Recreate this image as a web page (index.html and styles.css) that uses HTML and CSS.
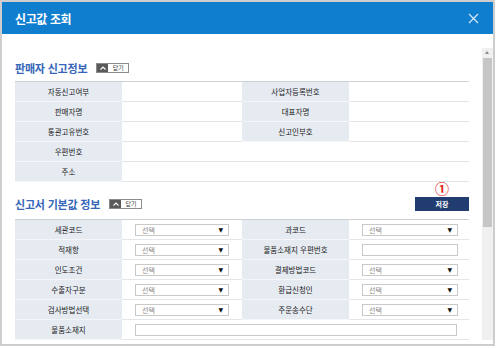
FILE: index.html
```html
<!DOCTYPE html>
<html lang="ko">
<head>
  <meta charset="UTF-8" />
  <title>신고값 조회</title>
  <link rel="stylesheet" href="styles.css">
</head>
<body>
  <div class="modal">
    <div class="modal-head">
      <h1>신고값 조회</h1>
      <svg class="close" width="11" height="11" viewBox="0 0 11 11"><path d="M1 1L10 10M10 1L1 10" stroke="#d2e6f7" stroke-width="1.3" fill="none"/></svg>
    </div>

    <div class="modal-body">
      <div class="content">
        <!-- 판매자 신고정보 -->
        <div class="sec-head first">
          <div class="sec-title">
            <h2>판매자 신고정보</h2>
            <span class="toggle">
              <span class="toggle-ico"><svg width="6" height="4" viewBox="0 0 6 4"><path d="M0.5 3.5L3 1L5.5 3.5" stroke="#fff" stroke-width="1.2" fill="none"/></svg></span>
              <span class="toggle-txt">닫기</span>
            </span>
          </div>
        </div>
        <div class="grid">
          <div class="lbl">자동신고여부</div><div class="val"></div>
          <div class="lbl">사업자등록번호</div><div class="val"></div>
          <div class="lbl">판매자명</div><div class="val"></div>
          <div class="lbl">대표자명</div><div class="val"></div>
          <div class="lbl">통관고유번호</div><div class="val"></div>
          <div class="lbl">신고인부호</div><div class="val"></div>
          <div class="lbl">우편번호</div><div class="val wide"></div>
          <div class="lbl">주소</div><div class="val wide"></div>
        </div>

        <!-- 신고서 기본값 정보 -->
        <div class="sec-head second">
          <div class="sec-title">
            <h2>신고서 기본값 정보</h2>
            <span class="toggle">
              <span class="toggle-ico"><svg width="6" height="4" viewBox="0 0 6 4"><path d="M0.5 3.5L3 1L5.5 3.5" stroke="#fff" stroke-width="1.2" fill="none"/></svg></span>
              <span class="toggle-txt">닫기</span>
            </span>
          </div>
          <div class="save-wrap">
            <span class="mark">&#x2460;</span>
            <button class="save-btn">저장</button>
          </div>
        </div>
        <div class="grid">
          <div class="lbl">세관코드</div><div class="val"><span class="sel">선택<i>&#x25BC;</i></span></div>
          <div class="lbl">과코드</div><div class="val"><span class="sel">선택<i>&#x25BC;</i></span></div>
          <div class="lbl">적재항</div><div class="val"><span class="sel">선택<i>&#x25BC;</i></span></div>
          <div class="lbl">물품소재지 우편번호</div><div class="val"><span class="inp"></span></div>
          <div class="lbl">인도조건</div><div class="val"><span class="sel">선택<i>&#x25BC;</i></span></div>
          <div class="lbl">결제방법코드</div><div class="val"><span class="sel">선택<i>&#x25BC;</i></span></div>
          <div class="lbl">수출자구분</div><div class="val"><span class="sel">선택<i>&#x25BC;</i></span></div>
          <div class="lbl">환급신청인</div><div class="val"><span class="sel">선택<i>&#x25BC;</i></span></div>
          <div class="lbl">검사방법선택</div><div class="val"><span class="sel">선택<i>&#x25BC;</i></span></div>
          <div class="lbl">주운송수단</div><div class="val"><span class="sel">선택<i>&#x25BC;</i></span></div>
          <div class="lbl">물품소재지</div><div class="val wide"><span class="inp long"></span></div>
        </div>
      </div>

      <div class="scrollbar">
        <div class="sb-up"></div>
        <div class="sb-thumb"></div>
      </div>
    </div>
  </div>
</body>
</html>
```

FILE: styles.css
```css
body {
  margin: 0;
  background: #fff;
  font-family: "Noto Sans CJK KR", "Noto Sans", sans-serif;
}

.modal {
  width: 495px;
  height: 346px;
  border: 2px solid #cdcdcd;
  box-sizing: border-box;
  display: flex;
  flex-direction: column;
  background: #fff;
}

.modal-head {
  height: 32px;
  background: #0f7ecf;
  display: flex;
  align-items: center;
  justify-content: space-between;
  padding: 0 13px 0 13px;
  flex-shrink: 0;
}

.modal-head h1 {
  margin: 0;
  color: #fff;
  font-size: 12px;
  font-weight: bold;
  letter-spacing: -0.4px;
}

.close {
  display: block;
  margin-right: 1px;
}

.modal-body {
  flex: 1;
  display: flex;
}

.content {
  flex: 1;
  padding: 28px 13px 0 13px;
}

.sec-head {
  display: flex;
  justify-content: space-between;
  align-items: flex-end;
}

.sec-head.first {
  height: 12px;
  margin-bottom: 7px;
}

.sec-head.second {
  height: 29px;
  margin-bottom: 8px;
}

.sec-title {
  display: flex;
  align-items: center;
  height: 12px;
}

.sec-head.second .sec-title {
  height: 14px;
}

.sec-title h2 {
  margin: 0 9px 0 0;
  font-size: 11px;
  font-weight: bold;
  color: #3465b8;
  letter-spacing: -0.2px;
  line-height: 12px;
}

.toggle {
  display: flex;
  height: 10px;
  border: 1px solid #8a8a8a;
  box-sizing: border-box;
}

.toggle-ico {
  width: 11px;
  background: #5a5a5a;
  display: flex;
  align-items: center;
  justify-content: center;
}

.toggle-ico svg {
  display: block;
}

.toggle-txt {
  width: 20px;
  background: #fff;
  color: #333;
  font-size: 6px;
  line-height: 8px;
  text-align: center;
}

.save-wrap {
  display: flex;
  flex-direction: column;
  align-items: center;
}

.mark {
  color: #e2231a;
  font-size: 14px;
  font-weight: bold;
  line-height: 13px;
  margin-bottom: 2px;
  font-family: "Noto Sans CJK KR", sans-serif;
}

.save-btn {
  width: 54px;
  height: 14px;
  padding: 0;
  border: none;
  background: #203c70;
  color: #fff;
  font-family: inherit;
  font-size: 7px;
  font-weight: bold;
}

.grid {
  display: grid;
  grid-template-columns: 107px 120px 107px 120px;
  border-top: 1px solid #cdd2d9;
}

.lbl,
.val {
  height: 20px;
  box-sizing: border-box;
  border-bottom: 1px solid #e2e5ea;
  display: flex;
  align-items: center;
}

.lbl {
  background: #e6ebf2;
  justify-content: center;
  font-size: 7.5px;
  color: #222;
  border-bottom-color: #f4f6f9;
}

.val {
  background: #fff;
  padding-left: 13px;
}

.val.wide {
  grid-column: span 3;
}

.sel,
.inp {
  width: 94px;
  height: 12px;
  box-sizing: border-box;
  border: 1px solid #c9c9c9;
  background: #fff;
  display: flex;
  align-items: center;
  justify-content: space-between;
  padding: 0 5px 0 6px;
  font-size: 7px;
  color: #888;
}

.sel i {
  font-style: normal;
  color: #111;
  font-size: 6px;
  font-family: "DejaVu Sans", sans-serif;
}

.grid .val:nth-child(4n) .sel,
.grid .val:nth-child(4n) .inp {
  width: 96px;
}

.inp.long {
  width: 322px;
}

.scrollbar {
  width: 11px;
  margin: 14px 0 4px 0;
  background: #f0f0f0;
  display: flex;
  flex-direction: column;
}

.sb-up {
  height: 10px;
  position: relative;
}

.sb-up::after {
  content: "";
  position: absolute;
  left: 3px;
  top: 3px;
  border-left: 2.5px solid transparent;
  border-right: 2.5px solid transparent;
  border-bottom: 3px solid #8a8a8a;
}

.sb-thumb {
  height: 169px;
  margin: 0 1px 0 1px;
  background: #c6c6c6;
}
```
